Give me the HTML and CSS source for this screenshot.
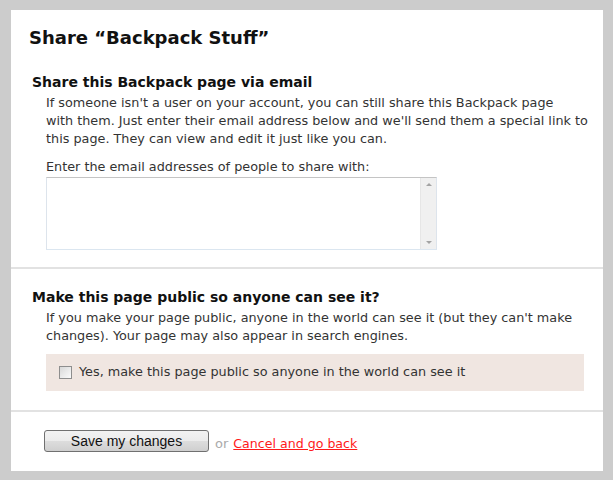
FILE: index.html
```html
<!DOCTYPE html>
<html lang="en">
<head>
  <meta charset="UTF-8" />
  <title>Share Backpack Stuff</title>
  <link rel="stylesheet" href="styles.css">
</head>
<body>
  <div class="dialog">
    <h1>Share &ldquo;Backpack Stuff&rdquo;</h1>

    <section class="block email">
      <h2>Share this Backpack page via email</h2>
      <div class="indent">
        <p>If someone isn't a user on your account, you can still share this Backpack page<br>with them. Just enter their email address below and we'll send them a special link to this page. They can view and edit it just like you can.</p>
        <label for="emails">Enter the email addresses of people to share with:</label>
        <div class="textbox">
          <textarea id="emails"></textarea>
          <div class="scrollbar">
            <span class="arrow up"></span>
            <span class="arrow down"></span>
          </div>
        </div>
      </div>
    </section>

    <section class="block public">
      <h2>Make this page public so anyone can see it?</h2>
      <div class="indent">
        <p>If you make your page public, anyone in the world can see it (but they can't make changes). Your page may also appear in search engines.</p>
        <label class="public-box">
          <input type="checkbox" />
          <span>Yes, make this page public so anyone in the world can see it</span>
        </label>
      </div>
    </section>

    <section class="block actions">
      <button class="save">Save my changes</button>
      <span class="or">or</span>
      <a href="#" class="cancel">Cancel and go back</a>
    </section>
  </div>
</body>
</html>
```

FILE: styles.css
```css
* {
  box-sizing: border-box;
  margin: 0;
  padding: 0;
}

body {
  background: #cccccc;
  font-family: "DejaVu Sans", Verdana, sans-serif;
  color: #222;
  padding: 10px 10px 9px 11px;
}

.dialog {
  background: #fff;
  height: 461px;
}

h1 {
  font-size: 18px;
  font-weight: bold;
  color: #111;
  padding: 16px 18px 0;
  line-height: 24px;
}

.block {
  padding: 0 3px 17px 21px;
}

.block + .block {
  border-top: 2px solid #e2e2e2;
}

h2 {
  font-size: 14px;
  font-weight: bold;
  color: #111;
  line-height: 20px;
  margin-bottom: 2px;
}

.email h2 {
  padding-top: 22px;
}

.public {
  padding-top: 18px;
  padding-bottom: 19px;
}

.indent {
  padding-left: 14px;
}

p, label {
  font-size: 12.8px;
  line-height: 18px;
  color: #333;
}

p {
  margin-bottom: 10px;
}

.public p {
  margin-bottom: 9px;
  padding-right: 16px;
}

label {
  display: block;
}

/* email box */
.textbox {
  display: flex;
  width: 391px;
  height: 73px;
  margin-top: 1px;
  border: 1px solid #c4c4c4;
  border-bottom-color: #dbe6f0;
  border-left-color: #dde4ec;
  border-right-color: #dde4ec;
}

.textbox textarea {
  flex: 1;
  border: none;
  resize: none;
  outline: none;
  font: inherit;
}

.scrollbar {
  width: 16px;
  background: #f0f0f0;
  border-left: 1px solid #e6e6e6;
  display: flex;
  flex-direction: column;
  justify-content: space-between;
  align-items: center;
  padding: 5px 0;
}

.arrow {
  width: 0;
  height: 0;
  border-left: 3px solid transparent;
  border-right: 3px solid transparent;
}

.arrow.up {
  border-bottom: 3px solid #a3a3a3;
}

.arrow.down {
  border-top: 3px solid #a3a3a3;
}

/* public checkbox */
.public-box {
  display: flex;
  align-items: center;
  gap: 7px;
  background: #f0e6e1;
  padding: 9px 13px 10px;
  width: 538px;
}

.public-box input {
  appearance: none;
  flex: none;
  width: 13px;
  height: 13px;
  border: 1px solid #8e8e8e;
  background: linear-gradient(135deg, #d8d8d8, #fbfbfb);
}

/* buttons */
.actions {
  display: flex;
  align-items: center;
  padding: 18px 33px 0;
}

.save {
  font-family: "Liberation Sans", Arial, sans-serif;
  font-size: 14px;
  width: 165px;
  height: 22px;
  border: 1px solid #707070;
  border-radius: 3px;
  background: linear-gradient(#f2f2f2, #ebebeb 50%, #dddddd 50%, #cfcfcf);
  color: #111;
}

.or {
  font-size: 13px;
  color: #aaa;
  margin: 4px 5px 0 6px;
}

.cancel {
  font-size: 12.6px;
  color: #ff1a1a;
  margin-top: 4px;
}
```
